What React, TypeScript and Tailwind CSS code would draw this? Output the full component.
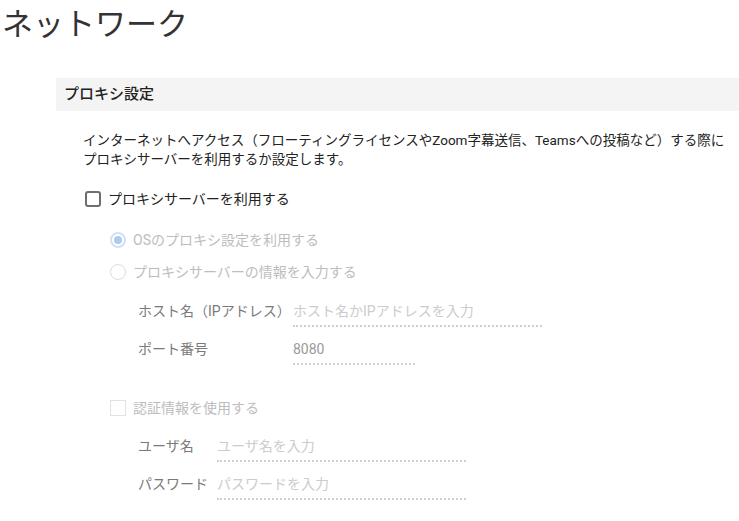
import React from "react";

const font = { fontFamily: 'Roboto, "Noto Sans CJK JP", sans-serif' };

function Field({ label, labelW, inputW, value, placeholder }: { label: string; labelW: string; inputW: string; value?: string; placeholder?: string }) {
  return (
    <div className="flex items-center h-[38px]">
      <div className={`${labelW} text-[14px] text-[#7a7a7a]`}>{label}</div>
      <div className={`${inputW} h-[28px] flex items-center border-b-2 border-dotted border-[#cfcfcf] mt-[3px]`}>
        {value ? (
          <span className="text-[14px] text-[#9a9a9a]">{value}</span>
        ) : (
          <span className="text-[14px] text-[#cccccc]">{placeholder}</span>
        )}
      </div>
    </div>
  );
}

export default function App() {
  return (
    <div className="w-[739px] h-[521px] bg-white overflow-hidden" style={font}>
      <div className="pl-[2px] pt-[3px] text-[31px] leading-[44px] text-[#333333]">ネットワーク</div>
      <div className="pl-[56px] mt-[31px]">
        <div className="h-[33px] bg-[#f4f4f4] flex items-center pl-[8px] text-[15px] font-medium text-[#222222]">
          プロキシ設定
        </div>
        <div className="pl-[27px] pt-[20px] text-[13.5px] leading-[19px] text-[#222222]">
          <div>インターネットへアクセス（フローティングライセンスやZoom字幕送信、Teamsへの投稿など）する際に</div>
          <div>プロキシサーバーを利用するか設定します。</div>
        </div>
        <div className="pl-[29px] mt-[17px] flex items-center h-[26px]">
          <div className="w-[16px] h-[16px] border-2 border-[#6e6e6e] rounded-[3px]" />
          <span className="ml-[7px] text-[14px] text-[#222222]">プロキシサーバーを利用する</span>
        </div>
        <div className="pl-[54px] mt-[12px]">
          <div className="flex items-center h-[32px]">
            <div className="w-[16px] h-[16px] rounded-full border-2 border-[#cfe2f4] flex items-center justify-center">
              <div className="w-[8px] h-[8px] rounded-full bg-[#a9cdee]" />
            </div>
            <span className="ml-[7px] text-[14px] text-[#bdbdbd]">OSのプロキシ設定を利用する</span>
          </div>
          <div className="flex items-center h-[32px]">
            <div className="w-[16px] h-[16px] rounded-full border border-[#dddddd]" />
            <span className="ml-[7px] text-[14px] text-[#bdbdbd]">プロキシサーバーの情報を入力する</span>
          </div>
        </div>
        <div className="pl-[82px] mt-[4px]">
          <Field label="ホスト名（IPアドレス）" labelW="w-[155px]" inputW="w-[249px]" placeholder="ホスト名かIPアドレスを入力" />
          <Field label="ポート番号" labelW="w-[155px]" inputW="w-[122px]" value="8080" />
        </div>
        <div className="pl-[54px] mt-[24px] flex items-center h-[32px]">
          <div className="w-[16px] h-[16px] border border-[#e2e2e2]" />
          <span className="ml-[7px] text-[14px] text-[#bdbdbd]">認証情報を使用する</span>
        </div>
        <div className="pl-[82px] mt-[3px]">
          <Field label="ユーザ名" labelW="w-[79px]" inputW="w-[249px]" placeholder="ユーザ名を入力" />
          <Field label="パスワード" labelW="w-[79px]" inputW="w-[249px]" placeholder="パスワードを入力" />
        </div>
      </div>
    </div>
  );
}
